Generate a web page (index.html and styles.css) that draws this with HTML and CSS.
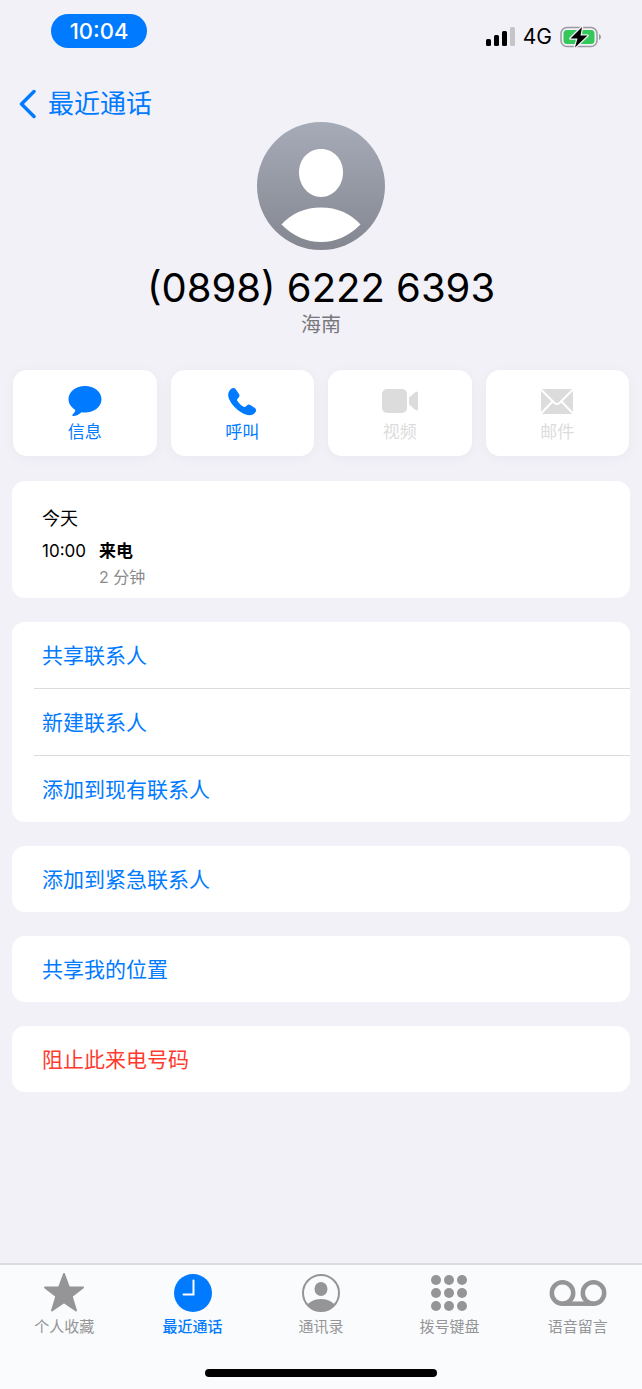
FILE: index.html
```html
<!DOCTYPE html>
<html lang="zh-CN">
<head>
  <meta charset="UTF-8" />
  <meta name="viewport" content="width=device-width, initial-scale=1" />
  <title>最近通话</title>
  <link rel="stylesheet" href="styles.css">
</head>
<body>
  <div class="status-bar">
    <span class="status-time">10:04</span>
    <div class="status-right">
      <svg class="signal" width="30" height="20" viewBox="0 0 30 20">
        <rect x="1" y="12" width="5" height="7" rx="1.5" />
        <rect x="9" y="8" width="5" height="11" rx="1.5" />
        <rect x="17" y="4" width="5" height="15" rx="1.5" />
        <rect x="25" y="0" width="5" height="19" rx="1.5" fill="#c5c5c9" />
      </svg>
      <span class="network">4G</span>
      <svg class="battery" width="42" height="22" viewBox="0 0 42 22">
        <rect x="1" y="1.5" width="36" height="19" rx="6" fill="none" stroke="#9b9b9f" stroke-width="1.5" />
        <rect x="3.5" y="4" width="31" height="14" rx="3.5" fill="#34c759" />
        <path d="M39 8v6q2-.8 2-3t-2-3z" fill="#9b9b9f" />
        <path d="M22 1 10.500 12.500h7L15 21.500 27.500 9.500h-7z" fill="#000" stroke="#f2f1f8" stroke-width="2.5" stroke-linejoin="round" paint-order="stroke" />
      </svg>
    </div>
  </div>

  <header class="nav">
    <a class="back-link" href="#">
      <svg width="18" height="30" viewBox="0 0 18 30">
        <path d="M16 2.500 3.500 15 16 27.500" fill="none" stroke="currentColor" stroke-width="3.500" stroke-linecap="round" stroke-linejoin="round" />
      </svg>
      最近通话
    </a>
  </header>

  <main>
    <section class="profile">
      <svg class="avatar" viewBox="0 0 128 128">
        <defs>
          <linearGradient id="avatarBg" x1="0" y1="0" x2="0" y2="1">
            <stop offset="0" stop-color="#a6abb8" />
            <stop offset="1" stop-color="#848790" />
          </linearGradient>
        </defs>
        <circle cx="64" cy="64" r="64" fill="url(#avatarBg)" />
        <path d="M64 27c12.500 0 22 10 22 23.500S76 75 64 75 42 64 42 50.500 51.500 27 64 27z" fill="#fff" />
        <path d="M24.500 102.500Q40 85.500 64 85.500t39.500 17Q86 120 64 120t-39.500-17.500z" fill="#fff" />
      </svg>
      <h1>(0898) 6222 6393</h1>
      <p class="region">海南</p>
    </section>

    <div class="actions">
      <button class="action">
        <svg width="36" height="32" viewBox="0 0 36 32">
          <path d="M18 1c9.200 0 16.500 5.800 16.500 13.300S27.200 27.500 18 27.500c-1.200 0-2.400-.1-3.500-.3-2.300 2.300-5.500 3.900-8 3.900-1.200 0-1.500-.9-.9-1.600 1.300-1.300 2.500-3 2.800-4.600C4.300 22.500 1.500 18.700 1.500 14.300 1.500 6.800 8.800 1 18 1z" fill="currentColor" />
        </svg>
        信息
      </button>
      <button class="action">
        <svg width="36" height="32" viewBox="0 0 36 32">
          <path d="M5 6.500C6 4.500 7.800 2.900 9.500 3c1.200.1 2 .8 2.700 1.900l2.600 3.800c1 1.500.9 2.600-.1 3.800l-1.300 1.500c-.5.600-.5 1.100-.1 1.700 1.500 2.500 3.800 4.700 6.400 6.100.7.400 1.200.3 1.700-.1l1.500-1.300c1.200-1.100 2.300-1.200 3.800-.2l3.800 2.500c1.100.8 1.600 1.500 1.600 2.500 0 1.700-1.500 3.300-3.300 4.200-2.900 1.400-6.600.8-11.300-1.900C12.300 24.500 7.500 19.300 5.300 14.500 3.900 11.500 3.800 8.700 5 6.500z" fill="currentColor" />
        </svg>
        呼叫
      </button>
      <button class="action" disabled>
        <svg width="38" height="32" viewBox="0 0 38 32">
          <rect x="1" y="4" width="25" height="24" rx="5" fill="currentColor" />
          <path d="M28 12.500 34.500 7Q37 5.500 37 8v16q0 2.500-2.500 1L28 19.500z" fill="currentColor" />
        </svg>
        视频
      </button>
      <button class="action" disabled>
        <svg width="36" height="32" viewBox="0 0 36 32">
          <rect x="2" y="4" width="32" height="25" rx="1" fill="currentColor" />
          <path d="M2 4.500 15.500 18q2.500 2 5 0L34 4.500M2 28.500 13.500 16.500M34 28.500 22.500 16.500" fill="none" stroke="#fff" stroke-width="2" />
        </svg>
        邮件
      </button>
    </div>

    <section class="card call-log">
      <h2>今天</h2>
      <dl>
        <dt>10:00</dt>
        <dd>
          <strong>来电</strong>
          <span>2 分钟</span>
        </dd>
      </dl>
    </section>

    <div class="card">
      <button class="row">共享联系人</button>
      <button class="row">新建联系人</button>
      <button class="row">添加到现有联系人</button>
    </div>

    <div class="card">
      <button class="row">添加到紧急联系人</button>
    </div>

    <div class="card">
      <button class="row">共享我的位置</button>
    </div>

    <div class="card">
      <button class="row danger">阻止此来电号码</button>
    </div>
  </main>

  <footer>
    <nav class="tabs">
      <a class="tab" href="#">
        <svg width="42" height="40" viewBox="0 0 42 40">
          <path d="M21 2 25.800 15.200 40 15.500 28.700 24.300 33 38.500 21 30.200 9 38.500 13.300 24.300 2 15.500 16.200 15.200z" fill="currentColor" stroke="currentColor" stroke-width="2" stroke-linejoin="round" />
        </svg>
        个人收藏
      </a>
      <a class="tab active" href="#">
        <svg width="40" height="40" viewBox="0 0 40 40">
          <circle cx="20" cy="21" r="19" fill="currentColor" />
          <path d="M20.500 8.500v14H10.500" fill="none" stroke="#fff" stroke-width="2" stroke-linecap="round" />
        </svg>
        最近通话
      </a>
      <a class="tab" href="#">
        <svg width="40" height="40" viewBox="0 0 40 40">
          <defs>
            <clipPath id="contactClip"><circle cx="20" cy="21" r="18" /></clipPath>
          </defs>
          <circle cx="20" cy="21" r="18" fill="none" stroke="currentColor" stroke-width="2" />
          <ellipse cx="20" cy="17" rx="6.500" ry="7" fill="currentColor" />
          <ellipse cx="20" cy="37" rx="15" ry="10" fill="currentColor" clip-path="url(#contactClip)" />
        </svg>
        通讯录
      </a>
      <a class="tab" href="#">
        <svg width="40" height="40" viewBox="0 0 40 40" fill="currentColor">
          <circle cx="7" cy="8" r="5" />
          <circle cx="20" cy="8" r="5" />
          <circle cx="33" cy="8" r="5" />
          <circle cx="7" cy="21" r="5" />
          <circle cx="20" cy="21" r="5" />
          <circle cx="33" cy="21" r="5" />
          <circle cx="7" cy="34" r="5" />
          <circle cx="20" cy="34" r="5" />
          <circle cx="33" cy="34" r="5" />
        </svg>
        拨号键盘
      </a>
      <a class="tab" href="#">
        <svg width="58" height="40" viewBox="0 0 58 40" fill="none" stroke="currentColor" stroke-width="4.500">
          <circle cx="13.500" cy="21" r="10.700" />
          <circle cx="44.500" cy="21" r="10.700" />
          <path d="M13.500 31.700h31" />
        </svg>
        语音留言
      </a>
    </nav>
    <div class="home-indicator"></div>
  </footer>
</body>
</html>
```
FILE: styles.css
```css
* {
  box-sizing: border-box;
}
body {
  font-family: Inter, 'Noto Sans CJK SC', sans-serif;
  background-color: #f2f1f8;
  color: #000;
  margin: 0;
  min-height: 100vh;
  display: flex;
  flex-direction: column;
}
h1, h2, p, dl, dd {
  margin: 0;
  font-weight: 400;
}
svg {
  display: block;
  flex-shrink: 0;
}
a {
  text-decoration: none;
}
button {
  font-family: inherit;
  background: #fff;
  border: none;
  cursor: pointer;
}

/* Status bar */
.status-bar {
  display: flex;
  justify-content: space-between;
  align-items: flex-start;
  padding: 14px 40px 0 51px;
}
.status-time {
  background: #007aff;
  color: #fff;
  width: 96px;
  border-radius: 17px;
  font-size: 22px;
  font-weight: 500;
  line-height: 34px;
  text-align: center;
}
.status-right {
  display: flex;
  align-items: center;
  gap: 8px;
  padding-top: 9px;
}
.network {
  font-size: 21px;
  line-height: 28px;
}

/* Header */
.nav {
  padding: 33px 18px 0;
}
.back-link {
  display: inline-flex;
  align-items: center;
  gap: 12px;
  color: #007aff;
  font-size: 26px;
  line-height: 40px;
}

main {
  flex: 1;
  display: flex;
  flex-direction: column;
  gap: 24px;
  padding: 0 12px 24px;
}

/* Contact */
.profile {
  text-align: center;
  margin-bottom: 8px;
}
.avatar {
  width: 128px;
  margin: -2px auto 0;
}
.profile h1 {
  font-size: 40px;
  line-height: 48px;
  padding-top: 14px;
}
.region {
  color: #77777b;
  font-size: 20px;
  line-height: 26px;
}

.actions {
  display: grid;
  grid-template-columns: repeat(4, 1fr);
  gap: 14px;
  padding: 0 1px 1px;
}
.action {
  display: flex;
  flex-direction: column;
  align-items: center;
  height: 86px;
  padding: 15px 0 0;
  border-radius: 14px;
  box-shadow: 0 2px 14px rgba(0, 0, 40, 0.04);
  color: #007aff;
  font-size: 17px;
  line-height: 30px;
}
.action:disabled {
  color: #dcdcdc;
  cursor: default;
}

/* Cards */
.card {
  background: #fff;
  border-radius: 13px;
  overflow: hidden;
}
.call-log {
  padding: 25px 30px 8px;
}
.call-log h2 {
  font-size: 18px;
  line-height: 26px;
}
.call-log dl {
  display: flex;
  gap: 13px;
  padding-top: 6px;
  font-size: 17px;
  line-height: 26px;
}
.call-log strong,
.call-log span {
  display: block;
}
.call-log strong {
  font-weight: 700;
}
.call-log span {
  color: #8a8a8e;
  font-size: 16px;
}
.row {
  display: block;
  width: 100%;
  padding: 2px 30px 0;
  color: #007aff;
  font-size: 21px;
  line-height: 64px;
  text-align: left;
}
.row + .row {
  width: calc(100% - 22px);
  margin-left: 22px;
  padding-left: 8px;
  border-top: 1px solid #dcdcdf;
}
.danger {
  color: #ff3b30;
}

/* Bottom tabs */
footer {
  background: #fafbfd;
  border-top: 2px solid #dddce2;
  padding: 7px 0 12px;
}
.tabs {
  display: grid;
  grid-template-columns: repeat(5, 1fr);
}
.tab {
  display: flex;
  flex-direction: column;
  align-items: center;
  color: #959597;
  font-size: 15px;
  line-height: 30px;
}
.tab.active {
  color: #007aff;
  font-weight: 500;
}
.home-indicator {
  width: 36%;
  height: 8px;
  margin: 27px auto 0;
  border-radius: 4px;
  background: #000;
}
```
